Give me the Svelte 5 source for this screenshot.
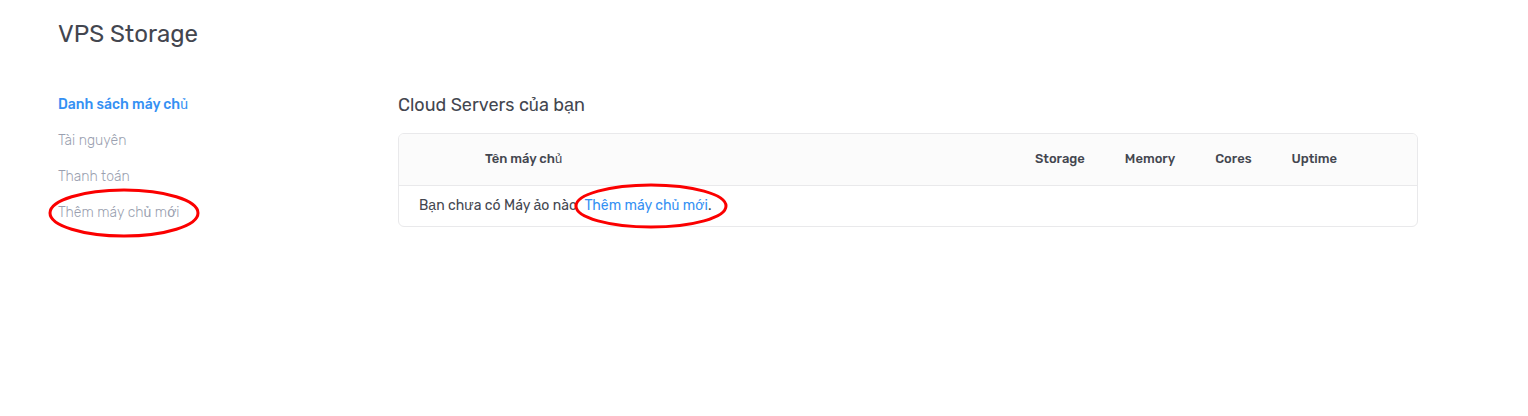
<script>
  const links = ['Tài nguyên', 'Thanh toán'];
</script>

<div class="page">
  <h1>VPS Storage</h1>
  <div class="layout">
    <nav aria-label="VPS Storage">
      <a class="active" href="#servers" aria-current="page">Danh sách máy ch<span class="alt">ủ</span></a>
      {#each links as label, i}
        <a href="#section-{i}">{label}</a>
      {/each}
      <a href="#new">Thêm máy ch<span class="alt">ủ</span> m<span class="alt">ớ</span>i<svg class="ring side" viewBox="0 0 152 50" aria-hidden="true"><ellipse cx="76" cy="25" rx="74" ry="23" /></svg></a>
    </nav>
    <main>
      <h2>Cloud Servers c<span class="alt">ủ</span>a b<span class="alt">ạ</span>n</h2>
      <div class="card">
        <table>
          <thead>
            <tr>
              <th class="name">Tên máy ch<span class="alt">ủ</span></th>
              <th>Storage</th>
              <th>Memory</th>
              <th>Cores</th>
              <th class="last">Uptime</th>
            </tr>
          </thead>
          <tbody>
            <tr>
              <td colspan="5">B<span class="alt">ạ</span>n ch<span class="alt">ư</span>a có Máy <span class="alt">ả</span>o nào <a class="add" href="#new">Thêm máy ch<span class="alt">ủ</span> m<span class="alt">ớ</span>i<svg class="ring inline" viewBox="0 0 154 46" aria-hidden="true"><ellipse cx="77" cy="23" rx="75" ry="21" /></svg></a>.</td>
            </tr>
          </tbody>
        </table>
      </div>
    </main>
  </div>
</div>

<style>
  :global(body) { margin: 0; background: #fff; }
  .page {
    padding: 20px 110px 40px 58px;
    font-family: Rubik, Roboto, "Liberation Sans", sans-serif;
    color: #43464f;
  }
  h1 { margin: 0; font-size: 24px; line-height: 28px; font-weight: 400; }
  .layout { display: flex; margin-top: 46px; }
  nav { display: flex; flex-direction: column; align-items: flex-start; gap: 14px; width: 340px; flex: none; }
  nav a { position: relative; font-size: 14px; line-height: 22px; font-weight: 300; color: #9a9fb0; text-decoration: none; }
  nav a.active { color: #3490f3; font-weight: 500; }
  .alt { font-family: "Liberation Sans", sans-serif; font-weight: 400; line-height: 1; }
  main { flex: 1; min-width: 0; }
  h2 { margin: 0 0 17px; font-size: 18px; line-height: 22px; font-weight: 400; }
  .card { border: 1px solid #e9e9eb; border-radius: 6px; }
  table { width: 100%; border-collapse: separate; border-spacing: 0; }
  th { padding: 15px 20px 16px; font-size: 13px; line-height: 20px; font-weight: 500; text-align: left; background: #fbfbfb; border-bottom: 1px solid #e9e9eb; white-space: nowrap; }
  .name { width: 100%; padding-left: 86px; border-top-left-radius: 5px; }
  .last { padding-right: 80px; border-top-right-radius: 5px; }
  td { padding: 10px 20px; font-size: 14px; line-height: 20px; }
  .add { position: relative; margin-left: 4px; color: #3490f3; text-decoration: none; }
  .ring { position: absolute; pointer-events: none; overflow: visible; }
  .ring ellipse { fill: none; stroke: #fb0000; stroke-width: 3; }
  .side { left: -10px; top: -14px; width: 152px; height: 50px; }
  .inline { left: -10px; top: -14px; width: 154px; height: 46px; }
</style>
